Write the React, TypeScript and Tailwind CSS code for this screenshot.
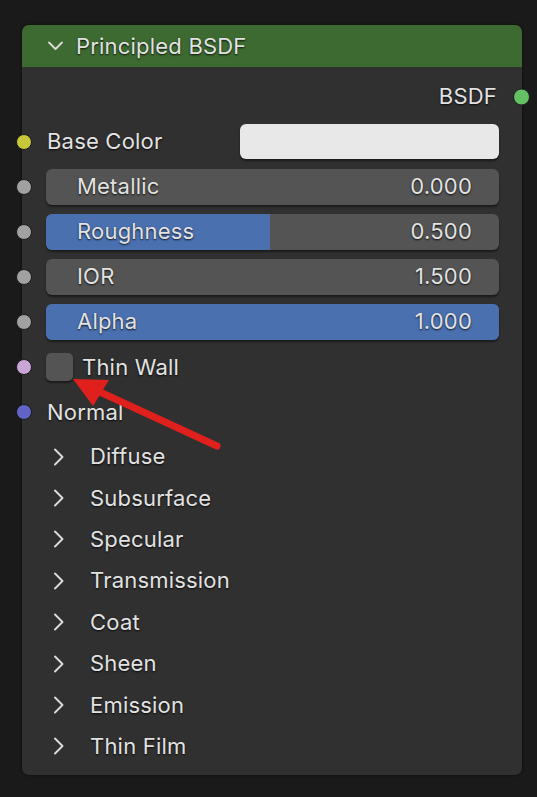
import React from "react";

const font = { fontFamily: "Inter, 'Noto Sans', sans-serif" };

function Socket({ color }: { color: string }) {
  return (
    <span
      className="absolute left-[-6px] top-1/2 h-[16px] w-[16px] -translate-y-1/2 rounded-full border border-[#1b1b1b]"
      style={{ background: color }}
    />
  );
}

function Slider({ label, value, fill }: { label: string; value: string; fill: number }) {
  return (
    <div className="relative flex h-[45px] items-center pl-[24px] pr-[23px]">
      <Socket color="#a1a1a1" />
      <div className="relative flex h-[36px] flex-1 items-center overflow-hidden rounded-[6px] bg-[#545454] shadow-[0_2px_2px_rgba(0,0,0,0.45)]">
        <div className="absolute inset-y-0 left-0 bg-[#4a70b0]" style={{ width: `${fill * 100}%` }} />
        <span className="relative pl-[31px]">{label}</span>
        <span className="relative ml-auto pr-[27px]">{value}</span>
      </div>
    </div>
  );
}

function Chevron() {
  return (
    <svg width="14" height="20" viewBox="0 0 14 20" className="shrink-0">
      <path d="M3 2.5 L10.5 10 L3 17.5" fill="none" stroke="#dcdcdc" strokeWidth="1.9" strokeLinecap="round" strokeLinejoin="round" />
    </svg>
  );
}

const panels = ["Diffuse", "Subsurface", "Specular", "Transmission", "Coat", "Sheen", "Emission", "Thin Film"];

export default function App() {
  return (
    <div
      className="relative h-[797px] w-[537px] overflow-hidden bg-[#1a1a1a] text-[22px] tracking-[0.2px] text-[#e2e2e2] [text-shadow:0_1px_2px_rgba(0,0,0,0.85)]"
      style={font}
    >
      <div className="pl-[22px] pt-[25px]">
        <div className="w-[500px] rounded-[7px] bg-[#303030] shadow-[0_0_3px_rgba(0,0,0,0.6)]">
          {/* header */}
          <div className="flex h-[42px] items-center rounded-t-[7px] bg-[#3c6a30] pl-[25px]">
            <svg width="17" height="12" viewBox="0 0 17 12" className="mr-[12px]">
              <path d="M2 2.5 L8.5 9 L15 2.5" fill="none" stroke="#dcdcdc" strokeWidth="1.8" strokeLinecap="round" strokeLinejoin="round" />
            </svg>
            <span>Principled BSDF</span>
          </div>

          <div className="pt-[7px] pb-[8px]">
            {/* output */}
            <div className="relative flex h-[45px] items-center justify-end pr-[25px]">
              <span>BSDF</span>
              <span className="absolute right-[-8px] top-1/2 h-[17px] w-[17px] -translate-y-1/2 rounded-full border border-[#1b1b1b] bg-[#63c063]" />
            </div>

            {/* base color */}
            <div className="relative flex h-[45px] items-center pl-[25px] pr-[23px]">
              <Socket color="#c7c73a" />
              <span>Base Color</span>
              <div className="ml-auto h-[35px] w-[259px] rounded-[6px] bg-[#e8e8e8] shadow-[0_2px_2px_rgba(0,0,0,0.45)]" />
            </div>

            <Slider label="Metallic" value="0.000" fill={0} />
            <Slider label="Roughness" value="0.500" fill={0.494} />
            <Slider label="IOR" value="1.500" fill={0} />
            <Slider label="Alpha" value="1.000" fill={1} />

            {/* thin wall */}
            <div className="relative flex h-[46px] items-center pl-[24px]">
              <Socket color="#c9a6d6" />
              <div className="h-[28px] w-[27px] rounded-[5px] bg-[#545454] shadow-[0_2px_2px_rgba(0,0,0,0.45)]" />
              <span className="pl-[9px]">Thin Wall</span>
            </div>

            {/* normal */}
            <div className="relative flex h-[44px] items-center pl-[25px]">
              <Socket color="#6363c7" />
              <span>Normal</span>
            </div>

            <div className="pt-[2px]">
              {panels.map((p) => (
                <div key={p} className="flex h-[41.4px] items-center pl-[30px]">
                  <Chevron />
                  <span className="pl-[24px]">{p}</span>
                </div>
              ))}
            </div>
          </div>
        </div>
      </div>

      {/* annotation arrow */}
      <svg className="pointer-events-none absolute left-0 top-0" width="537" height="797" viewBox="0 0 537 797">
        <line x1="217" y1="446" x2="100" y2="392" stroke="#e0201c" strokeWidth="7" strokeLinecap="round" />
        <polygon points="73,379 109,380 93,406" fill="#e0201c" />
      </svg>
    </div>
  );
}
